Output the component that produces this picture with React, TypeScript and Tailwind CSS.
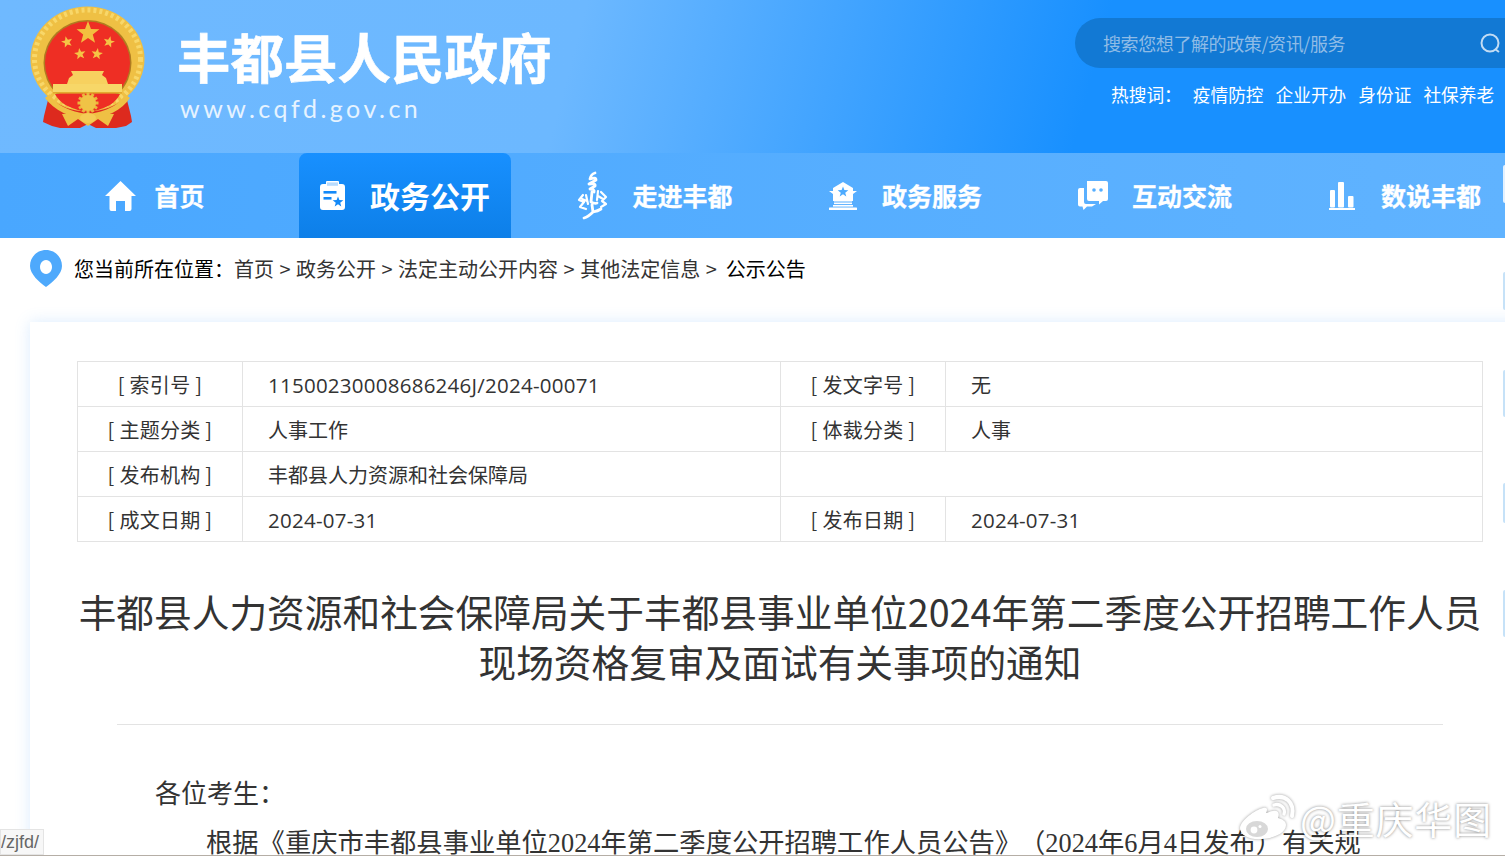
import React from "react";

const yh = "font-['Noto_Sans_CJK_SC','Noto_Sans',sans-serif]";

function Star({ cx, cy, r, fill = "#f5c445", rot = 0 }: { cx: number; cy: number; r: number; fill?: string; rot?: number }) {
  const pts: string[] = [];
  for (let i = 0; i < 10; i++) {
    const rad = i % 2 === 0 ? r : r * 0.42;
    const a = -Math.PI / 2 + rot + (i * Math.PI) / 5;
    pts.push(`${cx + rad * Math.cos(a)},${cy + rad * Math.sin(a)}`);
  }
  return <polygon points={pts.join(" ")} fill={fill} />;
}

function Emblem() {
  const teeth = Array.from({ length: 12 }, (_, i) => (i * 360) / 12);
  return (
    <svg width="116" height="123" viewBox="0 0 116 123" className="shrink-0">
      <path d="M21 82 L14 110 L13 116 L22 120 L30 122 L50 122 L58 118 L66 122 L86 122 L96 120 L102 116 L101 110 L94 82Z" fill="#dd2a1e" />
      <ellipse cx="57.5" cy="53" rx="57" ry="52.5" fill="#efc044" />
      <ellipse cx="57.5" cy="53" rx="53" ry="49" fill="none" stroke="#f8d769" strokeWidth="5" strokeDasharray="3 3" />
      <ellipse cx="57.5" cy="57" rx="44" ry="43" fill="#b07c20" />
      <ellipse cx="57.5" cy="57" rx="42.5" ry="41.5" fill="#ee2e24" />
      <Star cx={58} cy={27} r={12} fill="#f3bf3f" />
      <Star cx={37} cy={36} r={6} rot={-0.25} />
      <Star cx={79} cy={36} r={6} rot={0.25} />
      <Star cx={50} cy={48} r={6} rot={-0.15} />
      <Star cx={67} cy={48} r={6} rot={0.15} />
      <path d="M41 65 H74 L72 69 L76 72 L78 78 H37 L39 72 L43 69Z" fill="#f7d15f" />
      <rect x="23" y="78" width="69" height="8" fill="#f7d768" />
      <rect x="23" y="86" width="69" height="1.6" fill="#e2a92e" />
      <path d="M25 88 H90 C86 96 78 103 58 106 C38 103 29 96 25 88Z" fill="#ee2e24" />
      <path d="M20 88 C24 98 40 106 58 108 C76 106 91 98 95 88 L100 92 C92 104 76 112 58 113 C40 112 24 104 15 92Z" fill="#efc044" />
      {teeth.map((d) => (
        <rect key={d} x="56.5" y="86.5" width="3" height="4" fill="#eab83c" transform={`rotate(${d} 58 97)`} />
      ))}
      <circle cx="58" cy="97" r="8" fill="#f0c346" />
      <path d="M32 108 L46 107 L58 112 L70 107 L84 108 L78 120 L68 113 L58 120 L48 113 L38 120Z" fill="#efc044" />
      <ellipse cx="58" cy="112" rx="8" ry="5" fill="#f4cc55" />
    </svg>
  );
}

function HomeIcon() {
  return (
    <svg width="31" height="30" viewBox="0 0 31 30" fill="#fff">
      <path d="M15.5 0 L31 15 L26.5 15 L26.5 28 Q26.5 30 24.5 30 L20 30 L20 20 H11 L11 30 L6.5 30 Q4.5 30 4.5 28 L4.5 15 L0 15Z" />
    </svg>
  );
}
function DocIcon() {
  return (
    <svg width="25" height="29" viewBox="0 0 25 29" fill="#fff">
      <path d="M7 0 H18 Q19 0 19 1 V3 H22 Q25 3 25 6 V26 Q25 29 22 29 H3 Q0 29 0 26 V6 Q0 3 3 3 H6 V1 Q6 0 7 0Z" />
      <rect x="7" y="1.4" width="11" height="3.4" fill="#1389f8" opacity=".3" />
      <rect x="3.5" y="10" width="13" height="2.6" fill="#1389f8" />
      <rect x="3.5" y="16" width="8" height="2.6" fill="#1389f8" />
      <Star cx={18} cy={21} r={5.6} fill="#1389f8" />
    </svg>
  );
}
function CallIcon() {
  return (
    <svg width="31" height="50" viewBox="0 0 31 50" fill="none" stroke="#fff" strokeWidth="2.8" strokeLinecap="round" strokeLinejoin="round">
      <path d="M18 2 Q14 3 13 8 Q19 6 19 9 L12 13 Q19 12 18 15 L13 18 Q18 18 17 21" />
      <path d="M15 21 L14 31 Q18 33 20 32 M15 34 L16 41 Q11 46 7 47 M16 41 Q21 40 24 38" />
      <path d="M6 24 L2 29 L7 31 L3 36 L9 38 M9 24 L11 33 M5 28 L10 30" strokeWidth="2.2" />
      <path d="M21 20 L20 29 M24 21 L29 26 L25 30 L29 33 L24 36 M21 25 L26 28" strokeWidth="2.2" />
    </svg>
  );
}
function ServiceIcon() {
  return (
    <svg width="30" height="28" viewBox="0 0 30 28" fill="#fff">
      <path d="M15 0 L25 6 V9 H29 L25 12 V19 H5 V12 L1 9 H5 V6Z" />
      <Star cx={15} cy={10} r={5.6} fill="#4dabff" />
      <rect x="6" y="18" width="18" height="1.5" fill="#fff" />
      <rect x="6" y="20.5" width="18" height="1.6" />
      <rect x="5" y="23" width="20" height="1.6" />
      <rect x="1" y="25.5" width="28" height="2.5" rx="0.6" />
    </svg>
  );
}
function ChatIcon() {
  return (
    <svg width="30" height="29" viewBox="0 0 30 29" fill="#fff">
      <path d="M9 0 H28 Q30 0 30 2 V18 Q30 20 28 20 H25 L21 23.5 V20 H11 Q9 20 9 18Z" />
      <circle cx="16" cy="9" r="1.8" fill="#55aeff" />
      <circle cx="23" cy="9" r="1.8" fill="#55aeff" />
      <path d="M6 7 V21 Q6 23 8 23 H18 L14 25.5 H9 L5.5 29 L4.5 25.5 H2 Q0 25.5 0 23.5 V9 Q0 7 2 7Z" />
    </svg>
  );
}
function BarsIcon() {
  return (
    <svg width="26" height="28" viewBox="0 0 26 28" fill="#fff">
      <rect x="1" y="8" width="5" height="17.5" rx="1" />
      <rect x="9" y="0" width="6" height="25.5" rx="1" />
      <rect x="19" y="14" width="5.5" height="11.5" rx="1" />
      <rect x="0" y="26" width="26" height="2" />
    </svg>
  );
}
function Pin() {
  return (
    <svg width="32" height="38" viewBox="0 0 32 38" className="shrink-0">
      <path fillRule="evenodd" d="M16 0 C25 0 32 7 32 16 C32 24 23 32 16 37 C9 32 0 24 0 16 C0 7 7 0 16 0Z M16 10 A6 7 0 1 0 16.01 10Z" fill="#4ea9fc" />
    </svg>
  );
}
function Weibo() {
  return (
    <svg width="56" height="46" viewBox="0 0 56 46" fill="none" className="overflow-visible shrink-0">
      <g style={{ filter: "drop-shadow(0 0 1.5px rgba(0,0,0,.4))" }}>
        <path d="M23 13 C15 15 1 25 0 33 C0 41 11 45 22 44 C36 43 46 37 46 30 C46 26 42 24 38 23 C40 18 38 15 33 16 C30 16 28 18 26 18 C28 14 27 12 23 13Z" fill="#fff" />
        <ellipse cx="17" cy="34" rx="11" ry="8" fill="#d8d8d8" />
        <circle cx="14" cy="35" r="3.4" fill="#fff" />
        <circle cx="20" cy="31.5" r="1.5" fill="#fff" />
        <path d="M33 3 C45 -1 55 7 52 21" stroke="#fff" strokeWidth="4" strokeLinecap="round" />
        <path d="M34 10 C40 8 46 13 44 19" stroke="#fff" strokeWidth="3.4" strokeLinecap="round" />
      </g>
    </svg>
  );
}

const navs: { t: string; icon: React.ReactNode; gap: string }[] = [
  { t: "首页", icon: <HomeIcon />, gap: "gap-[18px]" },
  { t: "政务公开", icon: <DocIcon />, gap: "gap-[25px]" },
  { t: "走进丰都", icon: <CallIcon />, gap: "gap-[24px]" },
  { t: "政务服务", icon: <ServiceIcon />, gap: "gap-[24px]" },
  { t: "互动交流", icon: <ChatIcon />, gap: "gap-[24px]" },
  { t: "数说丰都", icon: <BarsIcon />, gap: "gap-[26px]" },
];

const slivers: [string, string][] = [
  ["top-[165px] h-[38px]", "bg-[#e3f1ff]"],
  ["top-[272px] h-[38px]", "bg-[#c6e2f8]"],
  ["top-[370px] h-[47px]", "bg-[#c6e2f8]"],
  ["top-[483px] h-[40px]", "bg-[#c6e2f8]"],
  ["top-[590px] h-[47px]", "bg-[#c6e2f8]"],
];

function Cell({ label }: { label: string }) {
  return (
    <div className="w-[165px] shrink-0 flex items-center justify-center text-[#333] border-r border-[#e3e3e3] tracking-[0.3px] pt-px">
      {label}
    </div>
  );
}

function Val({ v }: { v?: string }) {
  const latin = v ? /^[0-9]/.test(v) : false;
  return latin ? (
    <span className="pt-[2px] text-[20.5px] font-['Open_Sans','Noto_Sans_CJK_SC',sans-serif] tracking-[0.25px]">{v}</span>
  ) : (
    <span className="pt-px">{v}</span>
  );
}

function Row({ a, b, c, d, last }: { a: string; b: string; c?: string; d?: string; last?: boolean }) {
  return (
    <div className={`flex ${last ? "h-[44px]" : "h-[45px] border-b border-[#e3e3e3]"}`}>
      <Cell label={a} />
      <div className="w-[538px] shrink-0 border-r border-[#e3e3e3] pl-[25px] flex items-center text-[#333]">
        <Val v={b} />
      </div>
      {c ? <Cell label={c} /> : null}
      <div className="flex-1 pl-[25px] flex items-center text-[#333]">
        <Val v={d} />
      </div>
    </div>
  );
}

export default function App() {
  return (
    <div className={`relative w-[1505px] h-[856px] overflow-hidden bg-white ${yh}`}>
      <header className="h-[153px] flex justify-between bg-[linear-gradient(105deg,#6fb9ff_0%,#6cb8ff_38%,#1890ff_72%,#1890ff_100%)]">
        <div className="flex items-start pl-[30px] pt-[6px]">
          <Emblem />
          <div className="ml-[31px] pt-[18px]">
            <div className="text-white font-bold text-[53.5px] leading-[64px] whitespace-nowrap [-webkit-text-stroke:0.6px_white]">丰都县人民政府</div>
            <div className="text-[#e6f3ff] text-[25px] leading-[32px] tracking-[3.5px] ml-[3px] mt-[4px] font-['Lato',sans-serif]">www.cqfd.gov.cn</div>
          </div>
        </div>
        <div className="w-[430px] pt-[18px]">
          <div className="h-[50px] rounded-l-[25px] bg-[#1279d4] flex items-center justify-between pl-[28px] pr-[4px]">
            <span className="text-[#8fbce6] text-[18px] tracking-[-0.4px]">搜索您想了解的政策/资讯/服务</span>
            <svg width="22" height="22" viewBox="0 0 22 22" fill="none" stroke="#c2dcf4" strokeWidth="2">
              <circle cx="11" cy="11" r="8.5" />
              <path d="M16 17 L20 20" />
            </svg>
          </div>
          <div className="flex text-white text-[17.7px] mt-[14px] pl-[36px] leading-[24px] whitespace-nowrap">
            <span className="mr-[11px]">热搜词：</span>
            <span className="mr-[12px]">疫情防控</span>
            <span className="mr-[12px]">企业开办</span>
            <span className="mr-[12px]">身份证</span>
            <span>社保养老</span>
          </div>
        </div>
      </header>

      <nav className="h-[85px] pl-[30px] flex bg-[linear-gradient(90deg,#49a7ff,#60b3ff)] text-white font-bold">
        {navs.map(({ t, icon, gap }, i) => (
          <div key={t} className="w-[250px] shrink-0 flex justify-center">
            <div
              className={
                i === 1
                  ? `w-[212px] rounded-t-[8px] flex items-center justify-center text-[30px] bg-[linear-gradient(180deg,#1890ff,#0d7fe8)] ${gap}`
                  : `flex items-center justify-center text-[25px] [-webkit-text-stroke:0.3px_white] ${gap}`
              }
            >
              {icon}
              <span className="whitespace-nowrap">{t}</span>
            </div>
          </div>
        ))}
      </nav>

      <div className="h-[84px] pl-[30px] pt-[12px] flex items-start text-[20px] whitespace-nowrap">
        <Pin />
        <span className="ml-[12px] mt-[5px] leading-[28px] text-black">您当前所在位置：</span>
        <span className="mt-[5px] leading-[28px] text-[#333] [word-spacing:1px]">首页 &gt; 政务公开 &gt; 法定主动公开内容 &gt; 其他法定信息 &gt;</span>
        <span className="ml-[9px] mt-[5px] leading-[28px] text-black">公示公告</span>
      </div>

      <main className="relative ml-[30px] w-[1530px] h-[534px] bg-white pl-[47px] pt-[39px] shadow-[0_0_14px_rgba(90,170,250,0.22)] text-[20px]">
        <div className="w-[1406px] border border-[#e3e3e3]">
          <Row a="[ 索引号 ]" b="11500230008686246J/2024-00071" c="[ 发文字号 ]" d="无" />
          <Row a="[ 主题分类 ]" b="人事工作" c="[ 体裁分类 ]" d="人事" />
          <Row a="[ 发布机构 ]" b="丰都县人力资源和社会保障局" />
          <Row a="[ 成文日期 ]" b="2024-07-31" c="[ 发布日期 ]" d="2024-07-31" last />
        </div>
        <h1 className="w-[1406px] text-center text-[#333] text-[37.7px] leading-[50px] mt-[44px] whitespace-nowrap">
          丰都县人力资源和社会保障局关于丰都县事业单位2024年第二季度公开招聘工作人员
          <br />
          现场资格复审及面试有关事项的通知
        </h1>
        <div className="w-[1326px] ml-[40px] h-px bg-[#e3e3e3] mt-[38px]" />
        <p className="ml-[78px] mt-[47px] text-[26px] leading-[40px] text-[#333]">各位考生：</p>
        <p className="ml-[129px] mt-[12px] text-[26.3px] leading-[40px] text-[#333] whitespace-nowrap font-['Liberation_Serif','Noto_Sans_CJK_SC',serif]">
          根据《重庆市丰都县事业单位2024年第二季度公开招聘工作人员公告》
          <span className="ml-[11px]">（2024年6月4日发布）有关规</span>
        </p>
      </main>

      {slivers.map(([pos, c]) => (
        <div key={pos} className={`absolute right-0 w-[2px] rounded-l-[2px] ${pos} ${c}`} />
      ))}

      <div className="absolute left-0 bottom-px h-[26px] w-[44px] bg-[#f7f7f7] border border-[#e4e4e4] text-[#666] text-[18px] leading-[24px] font-['Liberation_Sans',sans-serif] overflow-hidden whitespace-nowrap">/zjfd/</div>
      <div className="absolute left-0 right-0 bottom-0 h-px bg-[#b5aea6]" />
      <div className="absolute left-[1240px] top-[794px] flex items-center">
        <Weibo />
        <span className="ml-[4px] text-white text-[38px] tracking-[0.8px] leading-[48px] [text-shadow:0_0_3px_rgba(0,0,0,0.5)]">@重庆华图</span>
      </div>
    </div>
  );
}
